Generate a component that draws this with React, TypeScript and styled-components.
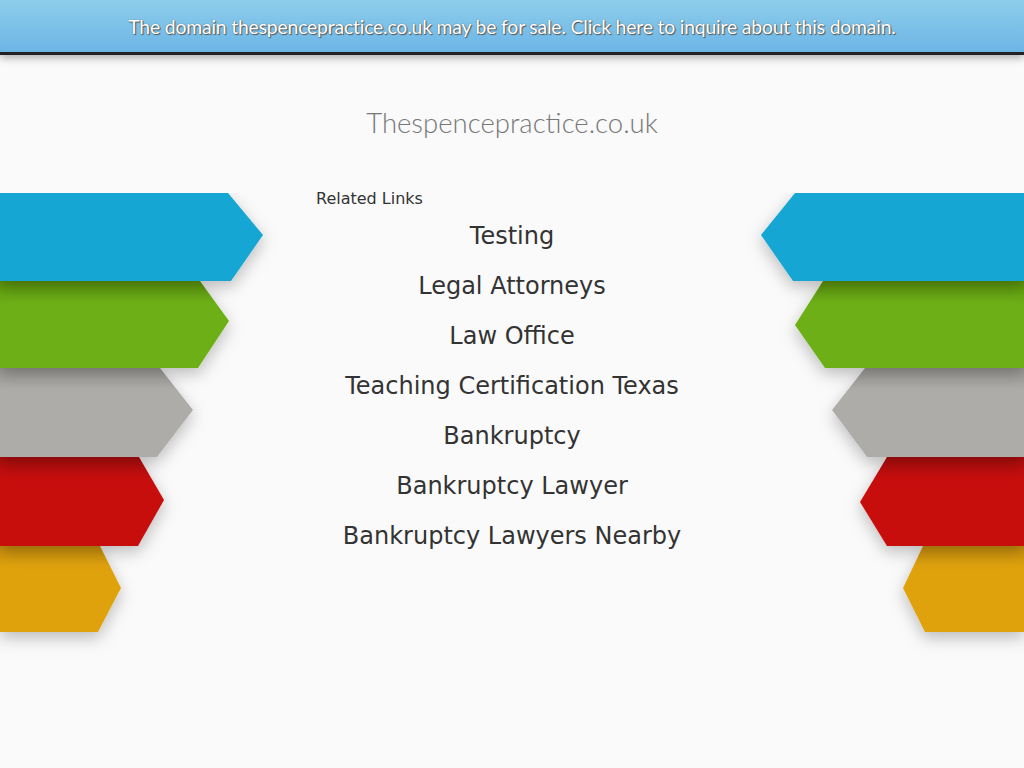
import styled, { createGlobalStyle } from "styled-components";

const GlobalStyle = createGlobalStyle`
  html, body {
    margin: 0;
    padding: 0;
    background: #fafafa;
  }
  body {
    font-family: "DejaVu Sans", sans-serif;
    overflow: hidden;
  }
`;

type Band = { color: string; dark: string; points: string };

// left-hand ribbons, drawn bottom-up so each one shades the next
const leftBands: Band[] = [
  { color: "#dfa20f", dark: "#c98f0c", points: "0,353 100,353 121,395 98,439 0,439" },
  { color: "#c81010", dark: "#ae0d0d", points: "0,264 139,264 164,307 138,353 0,353" },
  { color: "#adaca8", dark: "#9a9995", points: "0,175 160,175 193,217 157,264 0,264" },
  { color: "#6caf13", dark: "#5c9410", points: "0,88 200,88 229,128 198,175 0,175" },
  { color: "#13a6d3", dark: "#13a6d3", points: "0,0 228,0 263,42 231,88 0,88" },
];

const rightBands: Band[] = [
  { color: "#dfa20f", dark: "#c98f0c", points: "284,353 183,353 163,395 185,439 284,439" },
  { color: "#c81010", dark: "#ae0d0d", points: "284,264 147,264 120,309 147,353 284,353" },
  { color: "#adaca8", dark: "#9a9995", points: "284,175 125,175 92,217 127,264 284,264" },
  { color: "#6caf13", dark: "#5c9410", points: "284,88 83,88 55,132 85,175 284,175" },
  { color: "#13a6d3", dark: "#13a6d3", points: "284,0 55,0 21,42 53,88 284,88" },
];

const links = [
  "Testing",
  "Legal Attorneys",
  "Law Office",
  "Teaching Certification Texas",
  "Bankruptcy",
  "Bankruptcy Lawyer",
  "Bankruptcy Lawyers Nearby",
];

function Ribbons({ bands, id }: { bands: Band[]; id: string }) {
  return (
    <RibbonSvg width="284" height="470" viewBox="0 0 284 470">
      <defs>
        <filter id={`${id}-shadow`} x="-20%" y="-20%" width="140%" height="150%">
          <feDropShadow dx="0" dy="6" stdDeviation="8" floodColor="#000" floodOpacity="0.25" />
        </filter>
        {bands.map((b, i) => (
          <linearGradient key={i} id={`${id}-g${i}`} x1="0" y1="0" x2="0" y2="1">
            <stop offset="0" stopColor={b.dark} />
            <stop offset="0.25" stopColor={b.color} />
            <stop offset="1" stopColor={b.color} />
          </linearGradient>
        ))}
      </defs>
      {bands.map((b, i) => (
        <polygon
          key={i}
          points={b.points}
          fill={`url(#${id}-g${i})`}
          filter={`url(#${id}-shadow)`}
        />
      ))}
    </RibbonSvg>
  );
}

export default function App() {
  return (
    <>
      <GlobalStyle />
      <TopBar>
        <TopLink href="#">
          The domain thespencepractice.co.uk may be for sale. Click here to inquire about this domain.
        </TopLink>
      </TopBar>
      <Title>Thespencepractice.co.uk</Title>
      <Row>
        <Ribbons bands={leftBands} id="left" />
        <Center>
          <LinkBlock>
            <Label>Related Links</Label>
            <LinkList>
              {links.map((l) => (
                <li key={l}>
                  <RelatedLink href="#">{l}</RelatedLink>
                </li>
              ))}
            </LinkList>
          </LinkBlock>
        </Center>
        <Ribbons bands={rightBands} id="right" />
      </Row>
    </>
  );
}

const TopBar = styled.div`
  height: 52px;
  display: flex;
  align-items: center;
  justify-content: center;
  background: linear-gradient(180deg, #8dcdeb 0%, #6cb5e6 100%);
  border-bottom: 3px solid #222;
  box-shadow: 0 3px 8px rgba(0, 0, 0, 0.3);
  position: relative;
  z-index: 1;
`;

const TopLink = styled.a`
  font-family: "Lato", sans-serif;
  font-size: 19.4px;
  font-weight: 400;
  color: #fff;
  text-decoration: none;
  text-shadow: 0 0 1px #555, 1px 1px 1px #555;
  letter-spacing: -0.2px;
`;

const Title = styled.h1`
  margin: 48px 0 0;
  text-align: center;
  font-family: "Lato", sans-serif;
  font-weight: 300;
  font-size: 27.5px;
  line-height: 40px;
  color: #777;
`;

const Row = styled.div`
  margin-top: 46px;
  display: flex;
  align-items: flex-start;
`;

const RibbonSvg = styled.svg`
  flex: 0 0 284px;
  margin-top: 4px;
  display: block;
`;

const Center = styled.div`
  flex: 1;
  display: flex;
  justify-content: center;
`;

const LinkBlock = styled.div`
  width: 392px;
`;

const Label = styled.div`
  font-size: 16px;
  line-height: 20px;
  color: #333;
  margin-bottom: 2px;
`;

const LinkList = styled.ul`
  list-style: none;
  margin: 0;
  padding: 0;
`;

const RelatedLink = styled.a`
  display: block;
  text-align: center;
  font-size: 24px;
  line-height: 50px;
  color: #333;
  text-decoration: none;
`;
